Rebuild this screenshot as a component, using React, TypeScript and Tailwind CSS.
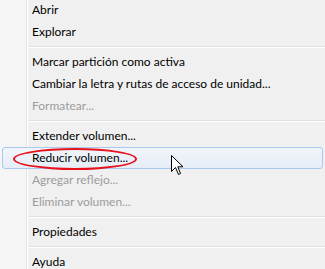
import React from "react";

type Item = { label: string; disabled?: boolean; hot?: boolean } | "sep";

const items: Item[] = [
  { label: "Abrir" },
  { label: "Explorar" },
  "sep",
  { label: "Marcar partición como activa" },
  { label: "Cambiar la letra y rutas de acceso de unidad..." },
  { label: "Formatear...", disabled: true },
  "sep",
  { label: "Extender volumen..." },
  { label: "Reducir volumen...", hot: true },
  { label: "Agregar reflejo...", disabled: true },
  { label: "Eliminar volumen...", disabled: true },
  "sep",
  { label: "Propiedades" },
  "sep",
  { label: "Ayuda" },
];

function Cursor() {
  return (
    <svg
      className="absolute left-[171px] top-[155px]"
      width="13"
      height="21"
      viewBox="0 0 13 21"
    >
      <path
        d="M0.5 0.5 L0.5 16.5 L4.5 12.5 L7.5 19.5 L9.5 18.5 L6.8 11.8 L12 11.8 Z"
        fill="#fff"
        stroke="#000"
        strokeWidth="1"
        strokeLinejoin="miter"
      />
    </svg>
  );
}

export default function App() {
  return (
    <div className="relative w-[325px] h-[269px] overflow-hidden bg-[linear-gradient(to_right,#f5f5f5_26px,#e2e3e3_26px,#e2e3e3_27px,#ffffff_27px,#ffffff_28px,#f0f0f0_28px)] font-['Lato',sans-serif] text-[12px] text-black">
      <ul className="-mt-px">
        {items.map((it, i) =>
          it === "sep" ? (
            <li key={i} className="h-[8px] pl-[28px] flex flex-col justify-center">
              <div className="h-px bg-[#e0e0e0]" />
              <div className="h-px bg-white" />
            </li>
          ) : it.hot ? (
            <li
              key={i}
              className="h-[22px] mx-[2px] rounded-[3px] border border-[#a8caf0] bg-[linear-gradient(to_bottom,#f1f5fb,#e6edf6)] pl-[29px] flex items-center"
            >
              {it.label}
            </li>
          ) : (
            <li
              key={i}
              className={
                "h-[22px] pl-[32px] flex items-center " +
                (it.disabled ? "text-[#9c9c9c]" : "")
              }
            >
              {it.label}
            </li>
          )
        )}
      </ul>
      <div className="absolute left-[13px] top-[148px] w-[124px] h-[22px] rounded-[50%] border-2 border-[#e8101a]" />
      <Cursor />
    </div>
  );
}
